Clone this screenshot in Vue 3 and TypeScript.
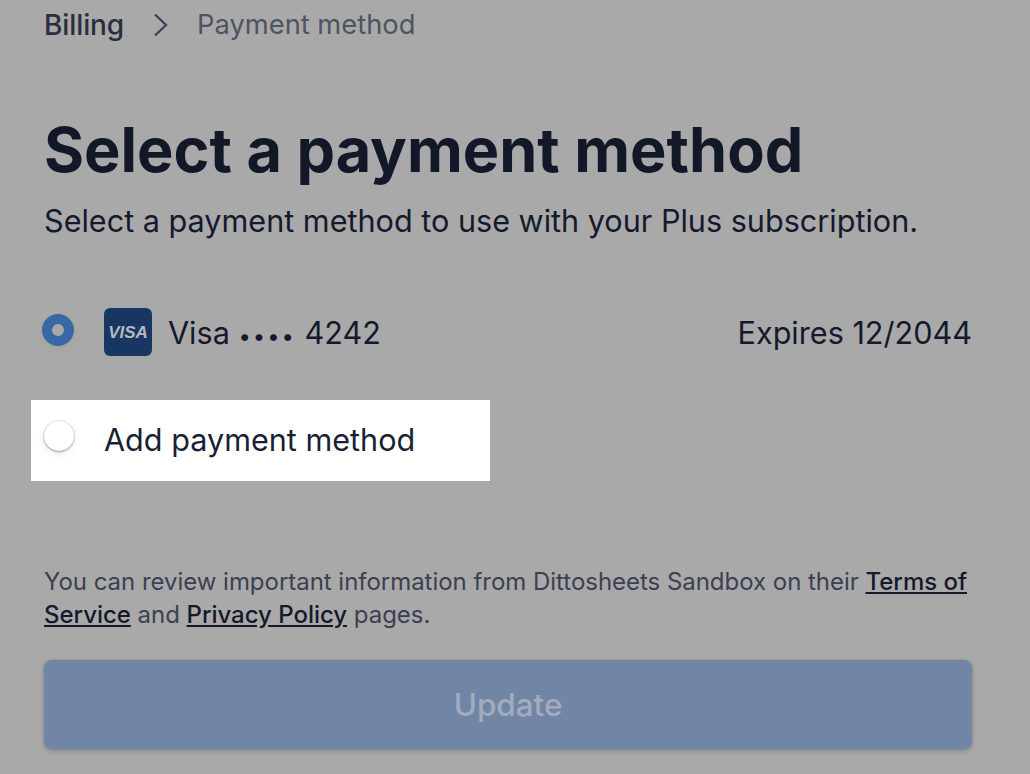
<template>
  <main class="page">
    <nav class="crumbs">
      <span class="crumb-root">Billing</span>
      <svg class="crumb-sep" width="15" height="24" viewBox="0 0 15 24" aria-hidden="true">
        <path d="M2 1.5l11 10.5L2 22.5" fill="none" stroke="#3b4154" stroke-width="2.3" />
      </svg>
      <span class="crumb-current">Payment method</span>
    </nav>

    <h1 class="title">Select a payment method</h1>
    <p class="subtitle">Select a payment method to use with your Plus subscription.</p>

    <div class="method">
      <span class="radio radio-on"></span>
      <span class="card-logo">
        <svg width="48" height="48" viewBox="0 0 48 48" aria-hidden="true">
          <rect width="48" height="48" rx="6" fill="#173762" />
          <text x="24" y="29.5" text-anchor="middle" class="visa-mark">VISA</text>
        </svg>
      </span>
      <span class="card-name">Visa <span class="dots">••••</span> 4242</span>
      <span class="expires">Expires 12/2044</span>
    </div>

    <div class="add-method">
      <span class="radio"></span>
      <span class="add-label">Add payment method</span>
    </div>

    <p class="legal">
      You can review important information from Dittosheets Sandbox on their
      <a href="#">Terms of</a> <a href="#">Service</a> and <a href="#">Privacy Policy</a> pages.
    </p>

    <button class="update" disabled>Update</button>
  </main>
</template>

<script setup lang="ts">
</script>

<style scoped>
.page { box-sizing: border-box; width: 1030px; height: 774px; overflow: hidden; padding: 0 58px 0 44px; background: #a9a9a9; color: #14192c; font-family: Inter, "Liberation Sans", sans-serif; }
.crumbs { display: flex; align-items: center; height: 49px; font-size: 28px; }
.crumb-root { font-weight: 500; color: #292e41; letter-spacing: -.1px; }
.crumb-sep { margin: 0 29px 0 29px; }
.crumb-current { color: #4e5464; font-size: 27.3px; }
.title { margin: 65px 0 0; font-size: 61.2px; line-height: 72px; font-weight: 700; color: #131829; }
.subtitle { margin: 12px 0 0; font-size: 30.6px; line-height: 46px; color: #14192c; }
.method { display: flex; align-items: center; margin-top: 64px; height: 48px; font-size: 30.6px; }
.radio { box-sizing: border-box; flex: none; width: 30px; height: 30px; margin-right: 30px; border-radius: 50%; background: #fff; box-shadow: 0 0 0 1px rgba(0, 0, 0, .08), 0 1px 2px rgba(0, 0, 0, .3), 0 3px 8px rgba(0, 0, 0, .08); }
.radio-on { width: 32px; height: 32px; margin: -4px 30px 0 -2px; border: 10px solid #3a67a6; background: #a9a9a9; box-shadow: 0 2px 6px rgba(0, 0, 0, .05); }
.card-logo { display: flex; margin-right: 16px; }
.visa-mark { font-family: "Liberation Sans", sans-serif; font-size: 17px; font-weight: 700; font-style: italic; fill: #b4b9bf; }
.card-name { color: #14192c; }
.dots { font-size: 22px; letter-spacing: 2px; }
.expires { margin-left: auto; }
.add-method { display: flex; align-items: center; width: 459px; height: 81px; margin: 44px 0 0 -13px; padding-left: 13px; box-sizing: border-box; background: #fff; font-size: 30.6px; color: #1a1f36; }
.add-method .radio { margin-top: -9px; }
.add-label { margin-top: -2px; }
.legal { margin: 84px 0 0; font-size: 24px; line-height: 33px; letter-spacing: -.03px; color: #3b4052; }
.legal a { color: #14192c; font-weight: 500; }
.update { display: block; width: 100%; height: 89px; margin-top: 29px; border: 0; border-radius: 8px; background: #7185a6; color: #a3acba; font: 500 31.4px Inter, "Liberation Sans", sans-serif; box-shadow: 0 0 0 1px rgba(0, 0, 0, .04), 0 2px 5px rgba(0, 0, 0, .2); }
</style>
<style>
body { background: #a9a9a9; }
</style>
